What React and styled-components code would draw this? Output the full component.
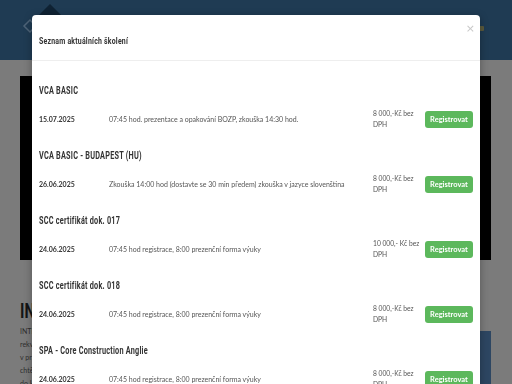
import React from 'react'
import styled, { createGlobalStyle } from 'styled-components'

const GlobalStyle = createGlobalStyle`
  html, body {
    margin: 0;
    padding: 0;
    height: 384px;
    overflow: hidden;
    background: #7b7b7b;
  }
  * { box-sizing: border-box; }
`

const courses = [
  {
    title: 'VCA BASIC',
    date: '15.07.2025',
    text: '07:45 hod. prezentace a opakování BOZP, zkouška 14:30 hod.',
    price: '8 000,-Kč bez DPH',
  },
  {
    title: 'VCA BASIC - BUDAPEST (HU)',
    date: '26.06.2025',
    text: 'Zkouška 14:00 hod (dostavte se 30 min předem) zkouška v jazyce slovenština',
    price: '8 000,-Kč bez DPH',
  },
  {
    title: 'SCC certifikát dok. 017',
    date: '24.06.2025',
    text: '07:45 hod registrace, 8:00 prezenční forma výuky',
    price: '10 000,- Kč bez DPH',
  },
  {
    title: 'SCC certifikát dok. 018',
    date: '24.06.2025',
    text: '07:45 hod registrace, 8:00 prezenční forma výuky',
    price: '8 000,-Kč bez DPH',
  },
  {
    title: 'SPA - Core Construction Anglie',
    date: '24.06.2025',
    text: '07:45 hod registrace, 8:00 prezenční forma výuky',
    price: '8 000,-Kč bez DPH',
  },
]

const App = () => {
  return (
    <>
      <GlobalStyle />
      <Page>
        <Header>
          <Logo width="70" height="60" viewBox="0 0 70 60">
            <path d="M48 4 L64 20 L48 36 L32 20 Z" fill="#0f2233" />
            <path d="M28 20 L34 26 L28 32 L22 26 Z" fill="none" stroke="#4e6478" strokeWidth="1.5" />
          </Logo>
          <NavMark />
        </Header>
        <Main>
          <Video />
          <Content>
            <TextCol>
              <BigTitle>INFORMACE</BigTitle>
              <Para>INTERSAFE s.r.o. je společnost zaměřená na</Para>
              <Para>rekvalifikační kurzy a školení bezpečnosti</Para>
              <Para>v pracovním prostředí pro firmy, které</Para>
              <Para>chtějí pracovat v zahraničí, hlavně</Para>
              <Para>do Holandska a Belgie.</Para>
            </TextCol>
            <SideCard />
          </Content>
        </Main>
      </Page>

      <Overlay>
        <Modal>
          <ModalHeader>
            <ModalTitle>Seznam aktuálních školení</ModalTitle>
            <Close>×</Close>
          </ModalHeader>
          <ModalBody>
            {courses.map((c) => (
              <Course key={c.title}>
                <CourseTitle>{c.title}</CourseTitle>
                <Row>
                  <DateCell>{c.date}</DateCell>
                  <Desc>{c.text}</Desc>
                  <Price>{c.price}</Price>
                  <RegButton>Registrovat</RegButton>
                </Row>
              </Course>
            ))}
          </ModalBody>
        </Modal>
      </Overlay>
    </>
  )
}

export default App

const Page = styled.div`
  height: 384px;
  display: flex;
  flex-direction: column;
  font-family: "Lato", "Open Sans", sans-serif;
`

const Header = styled.header`
  height: 77px;
  background: #1f3b53;
  display: flex;
  align-items: flex-start;
  justify-content: space-between;
  padding: 0 28px 0 2px;
`

const Logo = styled.svg`
  display: block;
`

const NavMark = styled.div`
  width: 6px;
  height: 5px;
  margin-top: 26px;
  background: #5b5a3c;
  border-radius: 1px;
`

const Main = styled.main`
  flex: 1;
  background: #7b7b7b;
  padding: 16px 21px 0 20px;
`

const Video = styled.div`
  height: 184px;
  background: #000;
`

const Content = styled.div`
  display: flex;
  justify-content: space-between;
  padding-top: 40px;
`

const TextCol = styled.div`
  display: flex;
  flex-direction: column;
`

const BigTitle = styled.div`
  font-family: "Roboto", sans-serif;
  font-weight: 700;
  font-size: 20px;
  line-height: 22px;
  color: #141414;
  margin-bottom: 3px;
  transform: scaleX(0.75);
  transform-origin: left center;
`

const Para = styled.div`
  font-size: 7px;
  line-height: 13px;
  color: #2e2e2e;
`

const SideCard = styled.div`
  width: 120px;
  height: 60px;
  margin-top: 31px;
  background: #2d4662;
`

const Overlay = styled.div`
  position: fixed;
  inset: 0;
  display: flex;
  justify-content: center;
  padding-top: 15px;
`

const Modal = styled.div`
  width: 448px;
  height: 420px;
  background: #fff;
  border-radius: 4px;
  box-shadow: 0 2px 8px rgba(0, 0, 0, 0.3);
  overflow: hidden;
  font-family: "Lato", "Open Sans", sans-serif;
`

const ModalHeader = styled.div`
  position: relative;
  height: 46px;
  border-bottom: 1px solid #eeeeee;
  display: flex;
  align-items: center;
  padding: 6px 7px 0;
`

const condensed = `
  display: inline-block;
  font-family: "Roboto", sans-serif;
  font-weight: 700;
  color: #333;
  white-space: nowrap;
  transform: scaleX(0.73);
  transform-origin: left center;
`

const ModalTitle = styled.div`
  ${condensed}
  font-size: 9.5px;
  letter-spacing: 0.3px;
`

const Close = styled.span`
  position: absolute;
  right: 5px;
  top: 7px;
  font-family: "DejaVu Sans", sans-serif;
  font-size: 11px;
  color: #c8c8c8;
`

const ModalBody = styled.div`
  padding: 24px 7px 0;
`

const Course = styled.div`
  margin-bottom: 20px;
`

const CourseTitle = styled.div`
  ${condensed}
  display: block;
  font-size: 10px;
  line-height: 12px;
  letter-spacing: 0.3px;
  margin-bottom: 11px;
`

const Row = styled.div`
  display: flex;
  align-items: center;
  height: 22px;
`

const DateCell = styled.div`
  width: 70px;
  font-size: 7px;
  font-weight: 700;
  color: #333;
`

const Desc = styled.div`
  flex: 1;
  font-size: 7px;
  color: #555;
  white-space: nowrap;
  overflow: hidden;
`

const Price = styled.div`
  width: 52px;
  font-size: 6.7px;
  line-height: 11px;
  color: #555;
`

const RegButton = styled.button`
  width: 48px;
  height: 17px;
  padding: 0;
  border: none;
  border-radius: 3px;
  background: #5cb85c;
  color: #fff;
  font-family: "Lato", "Open Sans", sans-serif;
  font-size: 7.5px;
  font-weight: 700;
  cursor: pointer;
`
